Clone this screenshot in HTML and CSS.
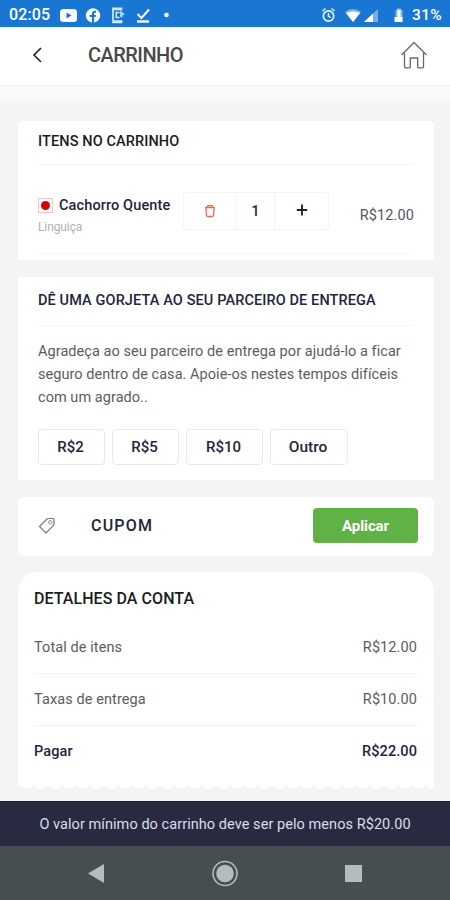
FILE: index.html
```html
<!DOCTYPE html>
<html lang="pt-BR">
<head>
<meta charset="utf-8">
<title>Carrinho</title>
<link rel="stylesheet" href="styles.css">
</head>
<body>
<div class="status">
  <span class="time">02:05</span>
  <svg class="status-left" width="114" height="18" viewBox="0 0 114 18">
    <rect x="1" y="3" width="17" height="13" rx="3.5" fill="#fff"/><path d="M7.500 6.500v6l5-3z" fill="#1976d2"/>
    <circle cx="34" cy="9.500" r="7.200" fill="#fff"/><path d="M33 17v-6h-2.300V9H33V7.500c0-2 1.200-3 4-2.700v1.900c-1.500 0-1.900.2-1.900 1.200V9H37l-.4 2h-1.500v6z" fill="#1976d2"/>
    <path d="M62.500 4.500V2.300H54v14h8.500V14M54 3.500h8.500M54 15.200h8.500" fill="none" stroke="#d5e8fb" stroke-width="1.700"/><path d="M60.500 6.500h-3.300v5h3.300" fill="none" stroke="#d5e8fb" stroke-width="1.500"/><path d="M61 4.500l5 3.700-2 .8-1 3-2-1.500z" fill="#a9cef3"/>
    <path d="M78.500 8l4 4L90 3.500" fill="none" stroke="#fff" stroke-width="2"/><path d="M78 15.500h12" stroke="#fff" stroke-width="2.400"/>
    <circle cx="107.500" cy="9" r="2.300" fill="#fff"/>
  </svg>
  <svg class="status-right" width="86" height="18" viewBox="0 0 86 18">
    <circle cx="8.500" cy="10" r="5.200" fill="none" stroke="#e4f1ff" stroke-width="1.700"/><path d="M8.500 7v3.200l2 1.500M2.500 5l3-2.500M14.500 5l-3-2.500" fill="none" stroke="#e4f1ff" stroke-width="1.500"/>
    <path d="M25 6q8-6 16 0l-8 10z" fill="#83b6ea"/><path d="M26 7q7-3 14 0l-7 9z" fill="#fff"/>
    <path d="M44 16L58 3v13z" fill="#76afe7"/><path d="M44 16l9-8.500V16z" fill="#fff"/>
    <path d="M75.500 4H77V2.500h4V4h1.500v12h-7z" fill="#86b9ec"/><path d="M77.500 4h3v7h2v5h-8v-5h3z" fill="#fff"/>
  </svg>
  <span class="battery">31%</span>
</div>
<header class="header">
  <svg class="back" width="12" height="18" viewBox="0 0 12 18"><path d="M10 2L3 9l7 7" fill="none" stroke="#222" stroke-width="1.600"/></svg>
  <h1 class="title">CARRINHO</h1>
  <svg class="home" width="28" height="30" viewBox="0 0 28 30"><path d="M4.500 13v14q0 .8.800.800h4.200q.8 0 .8-.8v-9h7.400v9q0 .8.800.800h4.200q.8 0 .8-.8V13M1.500 15L14 2.500 26.500 15" fill="none" stroke="#666a6d" stroke-width="1.300"/></svg>
</header>
<div class="strip"></div>
<main class="main">
  <section class="card items">
    <h2 class="heading"><span>ITENS NO CARRINHO</span></h2>
    <div class="item">
      <div class="product">
        <div class="name-row"><span class="mark"></span><span class="name">Cachorro Quente</span></div>
        <div class="note">Linguiça</div>
      </div>
      <div class="stepper">
        <span class="cell trash"><svg width="12" height="14" viewBox="0 0 12 14"><path d="M1 3.500h10M3.800 3V1.700h4.400V3M2 4l.4 7q.1 1.500 1.500 1.500h4.200q1.400 0 1.500-1.500L10 4" fill="none" stroke="#ee6655" stroke-width="1.300"/></svg></span>
        <span class="cell count">1</span>
        <span class="cell plus"><svg width="12" height="12" viewBox="0 0 12 12"><path d="M6 .5v11M.8 6h10.400" stroke="#22213a" stroke-width="1.900"/></svg></span>
      </div>
      <span class="price">R$12.00</span>
    </div>
  </section>
  <section class="card tip">
    <h2 class="heading"><span>DÊ UMA GORJETA AO SEU PARCEIRO DE ENTREGA</span></h2>
    <p class="copy"><span>Agradeça ao seu parceiro de entrega por ajudá-lo a ficar</span><br><span>seguro dentro de casa. Apoie-os nestes tempos difíceis</span><br><span>com um agrado..</span></p>
    <div class="tips">
      <button>R$2</button><button>R$5</button><button class="t10">R$10</button><button class="other">Outro</button>
    </div>
  </section>
  <section class="card coupon">
    <svg width="18" height="18" viewBox="0 0 18 18"><path d="M1.500 9.500L9 2q.5-.5 1.200-.5h4.300q1.500 0 1.500 1.500v4q0 .8-.5 1.300L8 16z" fill="none" stroke="#777" stroke-width="1.200"/><circle cx="12.300" cy="5.300" r="1.700" fill="none" stroke="#888"/></svg>
    <span class="coupon-label">CUPOM</span>
    <button class="apply">Aplicar</button>
  </section>
  <section class="bill">
    <h2 class="bill-title">DETALHES DA CONTA</h2>
    <div class="row"><span>Total de itens</span><span>R$12.00</span></div>
    <div class="row"><span>Taxas de entrega</span><span>R$10.00</span></div>
    <div class="row total"><span>Pagar</span><span>R$22.00</span></div>
  </section>
  <div class="teeth"></div>
</main>
<div class="notice"><span>O valor mínimo do carrinho deve ser pelo menos R$20.00</span></div>
<nav class="nav">
  <svg width="450" height="54" viewBox="0 0 450 54"><path d="M88 27.500l16-9.500v19z" fill="#b4bcbf"/><circle cx="225" cy="27.500" r="12" fill="none" stroke="#b4bcbf" stroke-width="1.600"/><circle cx="225" cy="27.500" r="8.800" fill="#b4bcbf"/><rect x="345" y="19" width="17" height="17" fill="#b4bcbf"/></svg>
</nav>
</body>
</html>
```
FILE: styles.css
```css
* { box-sizing: border-box; }
body { margin: 0; width: 450px; height: 900px; overflow: hidden; display: flex; flex-direction: column; background: #f4f4f4; font-family: Roboto, sans-serif; color: #24243a; }
h1, h2, p { margin: 0; }
button { font: inherit; padding: 0; }
svg { display: block; flex: none; }
span { white-space: nowrap; }
.status { height: 27px; flex: none; display: flex; align-items: center; padding: 2px 8px 0 9px; background: #1976d2; color: #fff; font-weight: 500; font-size: 16px; }
.time { width: 50px; letter-spacing: .1px; }
.status-right { margin-left: 147px; }
.battery { margin-left: auto; font-size: 15.5px; letter-spacing: .3px; }
.header { height: 58px; flex: none; display: flex; align-items: center; padding: 0 22px 2px 31px; background: #fff; }
.title { margin-left: 45px; font-size: 20px; font-weight: 500; color: #484848; letter-spacing: -.55px; }
.home { margin-left: auto; }
.strip { height: 18px; flex: none; background: #f8f9fa; border-top: 1px solid #f1f2f2; }
.main { height: 698px; flex: none; padding: 18px 16px 0 18px; }
.card { background: #fff; padding: 0 20px; }
.items { height: 139px; border-radius: 5px 5px 0 0; }
.heading { height: 44px; padding-top: 12px; border-bottom: 1px solid #f4f4f4; font-size: 14.5px; line-height: 17px; font-weight: 500; letter-spacing: .11px; }
.items .heading { color: #1c1c1c; }
.item { height: 89px; display: flex; border-bottom: 1px solid #f9f9f9; }
.product { width: 145px; padding-top: 30px; }
.name-row { display: flex; align-items: center; height: 20px; }
.mark { width: 15px; height: 15px; border: 1px solid #f2c6c6; display: grid; place-items: center; margin: 0 6px 0 0; }
.mark::after { content: ""; width: 9px; height: 9px; border-radius: 50%; background: #ce0808; }
.name { font-size: 14.5px; font-weight: 500; letter-spacing: .12px; }
.note { font-size: 12px; line-height: 16px; margin-top: 4px; color: #b0b0b0; letter-spacing: -.1px; }
.stepper { width: 146px; height: 38px; margin-top: 27px; display: grid; grid-template-columns: 52px 38px 1fr; border: 1px solid #f4f4f4; border-radius: 3px; }
.cell { display: grid; place-items: center; font-size: 14px; font-weight: 500; }
.cell + .cell { border-left: 1px solid #f4f4f4; }
.plus { padding: 0 0 3px; }
.price { margin: 42px 0 0 auto; font-size: 14.5px; line-height: 17px; color: #55555f; letter-spacing: .12px; }
.tip { margin-top: 17px; height: 203px; }
.tip .heading { height: 49px; padding-top: 15px; }
.copy { margin-top: 14px; font-size: 14.5px; line-height: 23px; color: #5c5c60; letter-spacing: .05px; }
.tips { display: flex; gap: 7px; margin-top: 20px; }
.tips button { width: 67px; height: 36px; border: 1px solid #e9e9ec; border-radius: 4px; background: #fff; color: #24243a; font-size: 15px; font-weight: 500; padding-right: 2px; }
.tips .t10 { width: 77px; }
.tips .other { width: 78px; font-size: 15.500px; }
.coupon { margin-top: 17px; height: 59px; display: flex; align-items: center; border-radius: 6px; padding: 0 16px 2px 20px; }
.coupon-label { margin-left: 35px; font-size: 16px; font-weight: 500; letter-spacing: 1.2px; }
.apply { margin-left: auto; width: 105px; height: 35px; border: 0; border-radius: 4px; background: #60b246; color: #fff; font-size: 15px; font-weight: 700; letter-spacing: -.1px; }
.bill { margin-top: 16px; height: 212px; background: #fff; padding: 17px 17px 0 16px; border-radius: 20px 20px 0 0; }
.bill-title { height: 32px; font-size: 16px; line-height: 19px; font-weight: 500; color: #1c1c1c; letter-spacing: .06px; }
.row { height: 52.5px; border-bottom: 1px solid #f3f3f3; display: flex; justify-content: space-between; align-items: center; font-size: 14.5px; color: #5b5b62; letter-spacing: .09px; padding-top: 1px; }
.total { border: 0; font-weight: 500; color: #24243a; padding: 0 0 1px; }
.teeth { height: 5px; background: radial-gradient(ellipse 7px 5px at 7px 0, #fff 88%, transparent) 2px 0 / 14px 5px repeat-x; }
.notice { height: 45px; flex: none; border-top: 1px solid #1c1c38; background: #282a42; color: #dddde6; display: flex; justify-content: center; align-items: center; font-size: 14.5px; letter-spacing: .06px; }
.nav { height: 54px; flex: none; background: #464e52; }
```
